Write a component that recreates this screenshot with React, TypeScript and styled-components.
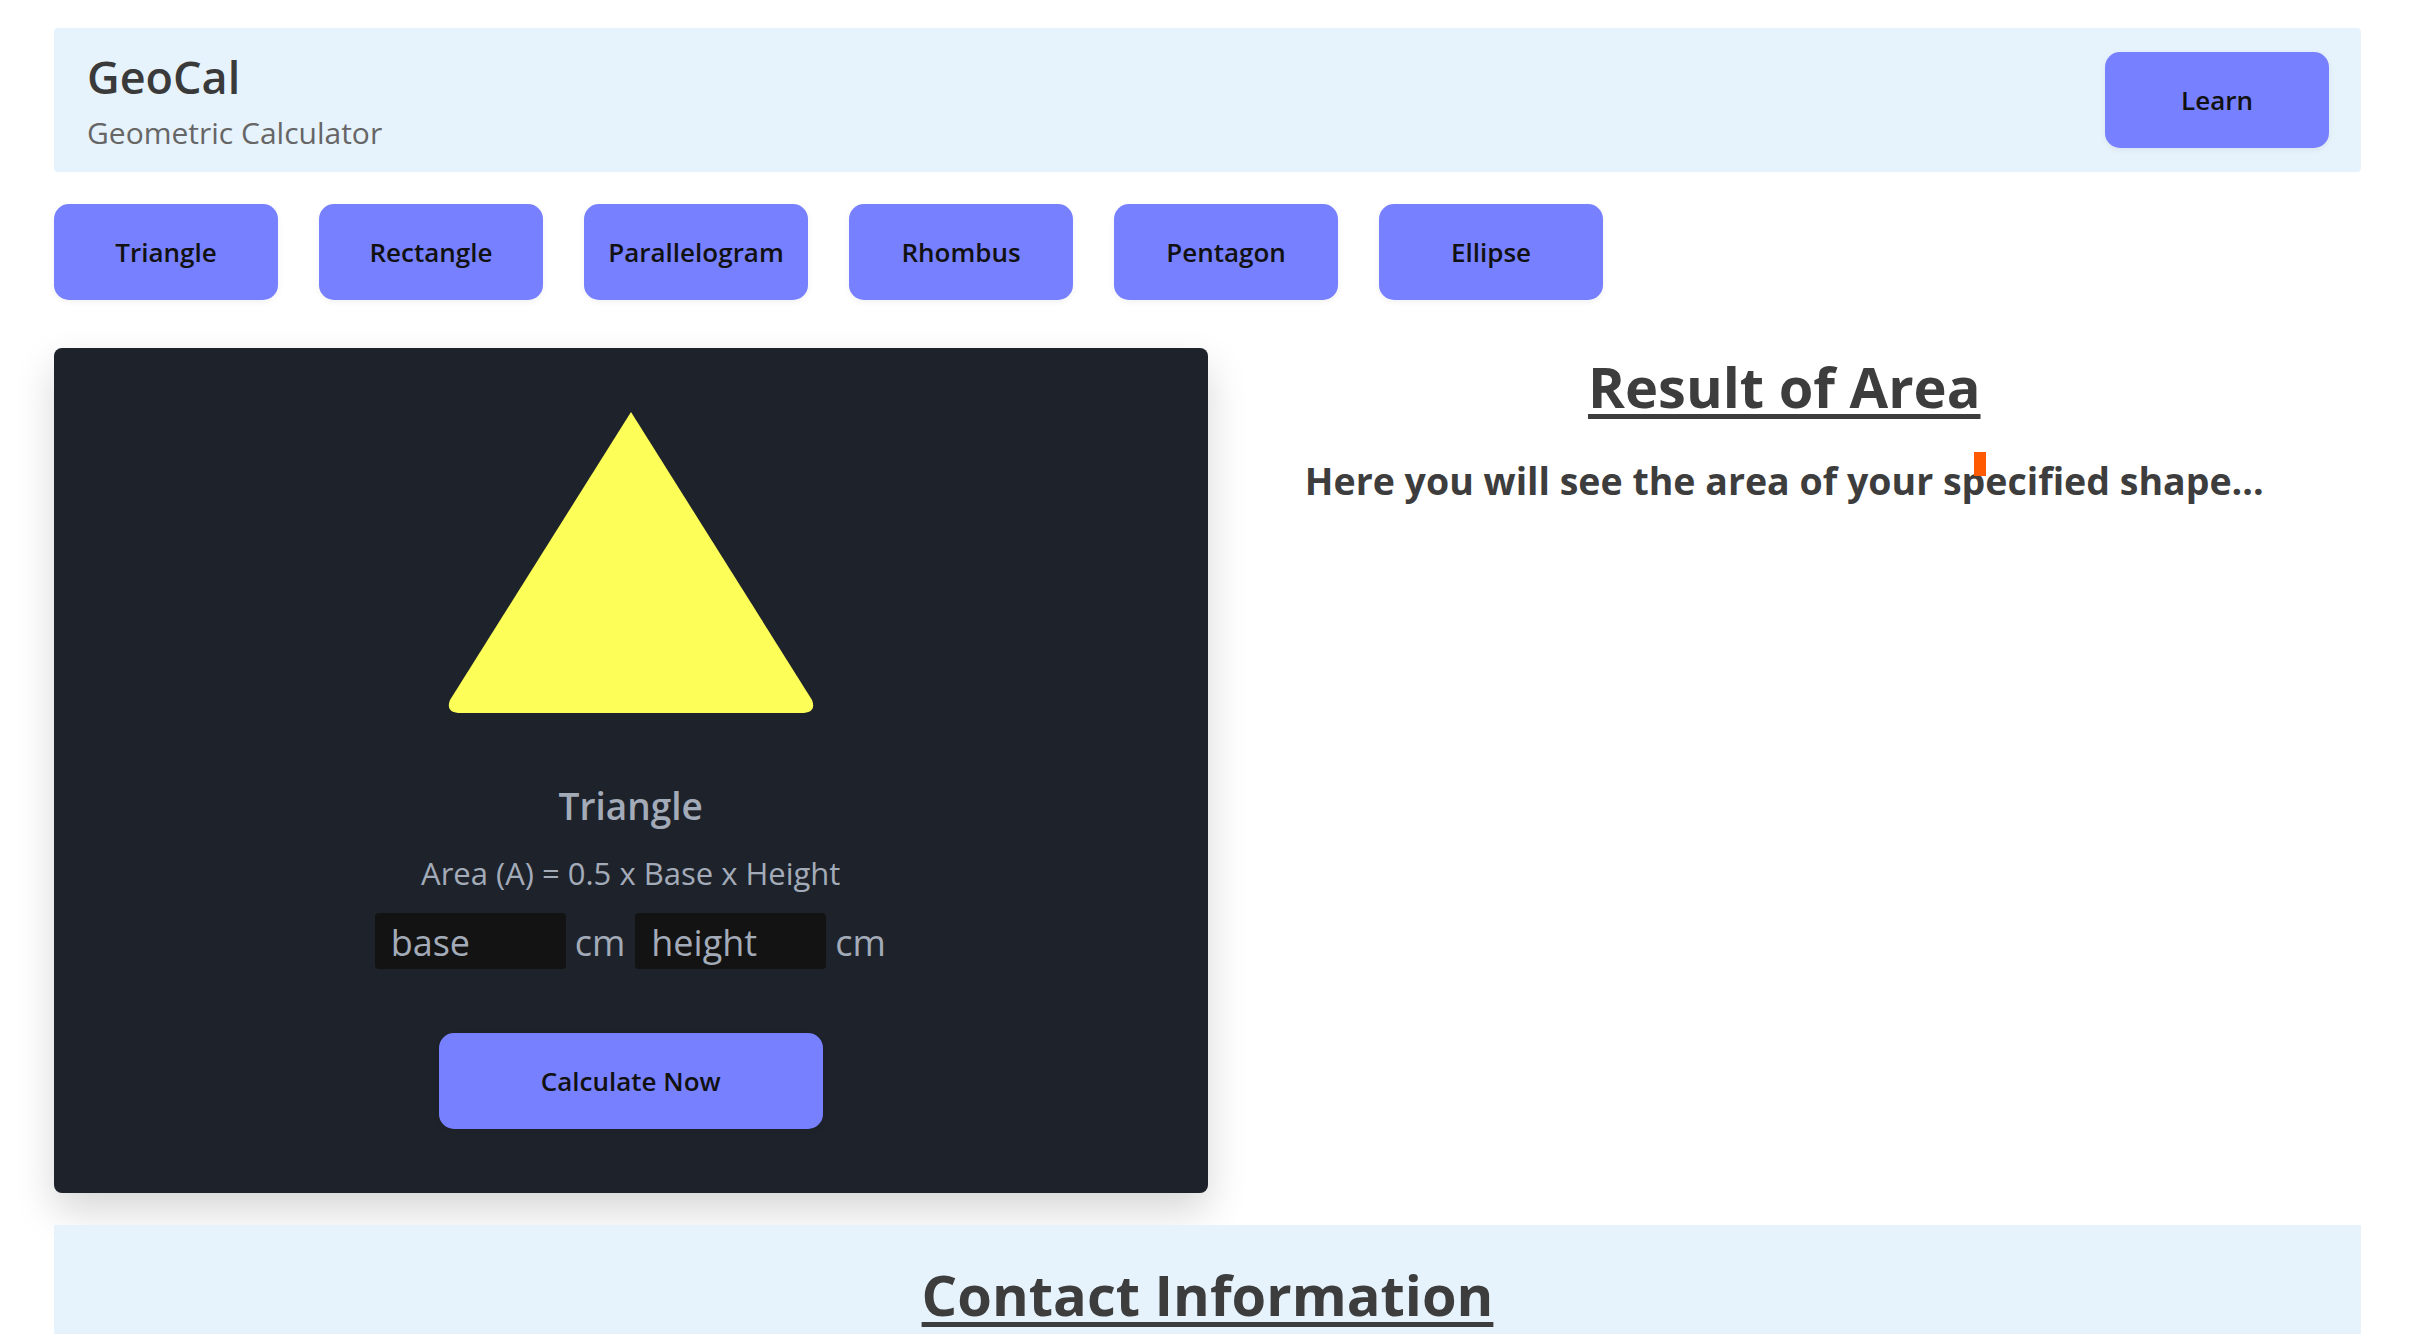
import React from "react";
import styled, { createGlobalStyle } from "styled-components";

const GlobalStyle = createGlobalStyle`
  * { box-sizing: border-box; }
  html, body { margin: 0; padding: 0; background: #ffffff; }
  body { font-family: "Open Sans", "Noto Sans", sans-serif; color: #3d3d3d; }
`;

const Page = styled.div`
  padding: 28px 57px 0 54px;
  display: flex;
  flex-direction: column;
`;

const Header = styled.header`
  height: 144px;
  background: #e6f3fc;
  border-radius: 4px;
  display: flex;
  align-items: center;
  justify-content: space-between;
  padding: 0 32px 0 33px;
`;

const Brand = styled.div`
  display: flex;
  flex-direction: column;
`;

const Title = styled.h1`
  margin: 2px 0 12px 0;
  font-size: 45px;
  line-height: 52px;
  font-weight: 600;
  color: #3a3a3a;
`;

const Subtitle = styled.p`
  margin: 0;
  font-size: 30px;
  line-height: 36px;
  font-weight: 400;
  color: #666666;
`;

const PillButton = styled.button<{ $w?: number }>`
  width: ${(p) => p.$w ?? 224}px;
  height: 96px;
  border: none;
  border-radius: 15px;
  background: #7780ff;
  color: #111111;
  font-family: "Open Sans", "Noto Sans", sans-serif;
  font-size: 26px;
  font-weight: 600;
  cursor: pointer;
  box-shadow: 0 2px 6px rgba(0, 0, 0, 0.06);
  flex-shrink: 0;
`;

const ShapeBar = styled.nav`
  margin-top: 32px;
  display: flex;
  gap: 41px;
`;

const Main = styled.main`
  margin-top: 48px;
  display: grid;
  grid-template-columns: 1fr 1fr;
`;

const Card = styled.section`
  background: #1e232b;
  border-radius: 8px;
  padding: 64px 0;
  display: flex;
  flex-direction: column;
  align-items: center;
  box-shadow: 0 18px 40px rgba(0, 0, 0, 0.16);
`;

const ShapeSvg = styled.svg`
  display: block;
  overflow: visible;
`;

const ShapeName = styled.h2`
  margin: 67px 0 0 0;
  font-size: 37px;
  font-weight: 600;
  line-height: 50px;
  color: #a3abb9;
`;

const Formula = styled.p`
  margin: 22px 0 0 0;
  font-size: 31px;
  line-height: 41px;
  font-weight: 400;
  color: #a3abb9;
`;

const InputRow = styled.div`
  margin-top: 19px;
  height: 56px;
  display: flex;
  align-items: flex-start;
  gap: 9px;
`;

const Field = styled.input`
  width: 191px;
  height: 56px;
  border: none;
  border-radius: 4px;
  background: #131313;
  padding: 3px 16px 0 16px;
  font-family: "Open Sans", "Noto Sans", sans-serif;
  font-size: 36px;
  color: #a3abb9;
  outline: none;
  &::placeholder { color: #a3abb9; }
`;

const Unit = styled.span`
  font-size: 36px;
  color: #a3abb9;
  line-height: 52px;
  margin-top: 4px;
  margin-right: 1px;
`;

const CalcWrap = styled.div`
  margin-top: 64px;
`;

const ResultCol = styled.section`
  position: relative;
  display: flex;
  flex-direction: column;
  align-items: center;
`;

const Heading = styled.h2`
  margin: 0;
  font-size: 56px;
  font-weight: 700;
  line-height: 76px;
  color: #3d3d3d;
  text-decoration: underline;
  text-decoration-thickness: 5px;
  text-underline-offset: 6px;
`;

const ResultText = styled.p`
  margin: 33px 0 0 0;
  font-size: 37.5px;
  font-weight: 700;
  line-height: 48px;
  color: #3d3d3d;
`;

const Caret = styled.span`
  position: absolute;
  left: 766px;
  top: 104px;
  width: 12px;
  height: 24px;
  background: #ff5a00;
`;

const Contact = styled.footer`
  margin-top: 32px;
  background: #e6f3fc;
  min-height: 200px;
  padding-top: 31px;
  display: flex;
  justify-content: center;
`;

const shapes = ["Triangle", "Rectangle", "Parallelogram", "Rhombus", "Pentagon", "Ellipse"];

export default function App() {
  return (
    <>
      <GlobalStyle />
      <Page>
        <Header>
          <Brand>
            <Title>GeoCal</Title>
            <Subtitle>Geometric Calculator</Subtitle>
          </Brand>
          <PillButton>Learn</PillButton>
        </Header>

        <ShapeBar>
          {shapes.map((s) => (
            <PillButton key={s}>{s}</PillButton>
          ))}
        </ShapeBar>

        <Main>
          <Card>
            <ShapeSvg width="366" height="302" viewBox="0 0 366 302">
              <path
                d="M183 0 L364 288 Q369 301 353 301 L13 301 Q-3 301 2 288 Z"
                fill="#fefe58"
              />
            </ShapeSvg>
            <ShapeName>Triangle</ShapeName>
            <Formula>Area (A) = 0.5 x Base x Height</Formula>
            <InputRow>
              <Field placeholder="base" />
              <Unit>cm</Unit>
              <Field placeholder="height" />
              <Unit>cm</Unit>
            </InputRow>
            <CalcWrap>
              <PillButton $w={384}>Calculate Now</PillButton>
            </CalcWrap>
          </Card>

          <ResultCol>
            <Heading>Result of Area</Heading>
            <ResultText>Here you will see the area of your specified shape...</ResultText>
            <Caret />
          </ResultCol>
        </Main>

        <Contact>
          <Heading>Contact Information</Heading>
        </Contact>
      </Page>
    </>
  );
}
